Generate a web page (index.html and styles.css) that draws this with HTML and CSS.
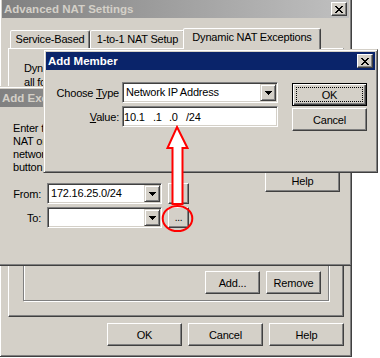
FILE: index.html
```html
<!DOCTYPE html>
<html lang="en">
<head>
    <meta charset="UTF-8">
    <title>Add Member</title>
    <link rel="stylesheet" href="styles.css">
</head>
<body>
<div class="desktop">

    <div class="window nat-window">
        <div class="titlebar inactive">
            <span class="title">Advanced NAT Settings</span>
            <span class="close-btn"><svg width="8" height="7" viewBox="0 0 8 7"><path d="M0 0h2v1H0zM6 0h2v1H6zM1 1h2v1H1zM5 1h2v1H5zM2 2h4v1H2zM3 3h2v1H3zM2 4h4v1H2zM1 5h2v1H1zM5 5h2v1H5zM0 6h2v1H0zM6 6h2v1H6z"/></svg></span>
        </div>
        <div class="tabs">
            <div class="tab tab-service">Service-Based</div>
            <div class="tab tab-one">1-to-1 NAT Setup</div>
            <div class="tab tab-dynamic selected">Dynamic NAT Exceptions</div>
        </div>
        <div class="tab-panel">
            <p class="intro">Dynamic NAT is not applied to traffic from the following sources<br>all following destinations listed below.</p>
            <div class="group">
                <div class="group-buttons">
                    <button class="btn btn-small">Add...</button>
                    <button class="btn btn-small">Remove</button>
                </div>
            </div>
        </div>
        <div class="dialog-buttons">
            <button class="btn">OK</button>
            <button class="btn">Cancel</button>
            <button class="btn">Help</button>
        </div>
    </div>

    <div class="window exception-window">
        <div class="titlebar inactive">
            <span class="title">Add Exception</span>
            <span class="close-btn"><svg width="8" height="7" viewBox="0 0 8 7"><path d="M0 0h2v1H0zM6 0h2v1H6zM1 1h2v1H1zM5 1h2v1H5zM2 2h4v1H2zM3 3h2v1H3zM2 4h4v1H2zM1 5h2v1H1zM5 5h2v1H5zM0 6h2v1H0zM6 6h2v1H6z"/></svg></span>
        </div>
        <div class="exception-body">
            <div class="exception-left">
                <p class="hint">Enter the source and destination that should not use dynamic<br>NAT or click the browse button to choose a host, an alias or a<br>network. Click the Add button in the exception list or click the<br>button again to change it.</p>
                <div class="range-grid">
                    <label class="range-label">From:</label>
                    <div class="combo"><span class="combo-text">172.16.25.0/24</span><span class="drop"><svg width="7" height="4" viewBox="0 0 7 4"><path d="M0 0H7V1H6V2H5V3H4V4H3V3H2V2H1V1H0Z"/></svg></span></div>
                    <button class="btn btn-browse">...</button>
                    <label class="range-label">To:</label>
                    <div class="combo"><span class="combo-text"></span><span class="drop"><svg width="7" height="4" viewBox="0 0 7 4"><path d="M0 0H7V1H6V2H5V3H4V4H3V3H2V2H1V1H0Z"/></svg></span></div>
                    <button class="btn btn-browse">...</button>
                </div>
            </div>
            <div class="side-buttons">
                <button class="btn">OK</button>
                <button class="btn">Cancel</button>
                <button class="btn">Help</button>
            </div>
        </div>
    </div>

    <div class="window member-window">
        <div class="titlebar active">
            <span class="title">Add Member</span>
            <span class="close-btn"><svg width="8" height="7" viewBox="0 0 8 7"><path d="M0 0h2v1H0zM6 0h2v1H6zM1 1h2v1H1zM5 1h2v1H5zM2 2h4v1H2zM3 3h2v1H3zM2 4h4v1H2zM1 5h2v1H1zM5 5h2v1H5zM0 6h2v1H0zM6 6h2v1H6z"/></svg></span>
        </div>
        <div class="member-body">
            <div class="member-grid">
                <label class="member-label">Choose <u>T</u>ype</label>
                <div class="combo"><span class="combo-text">Network IP Address</span><span class="drop"><svg width="7" height="4" viewBox="0 0 7 4"><path d="M0 0H7V1H6V2H5V3H4V4H3V3H2V2H1V1H0Z"/></svg></span></div>
                <label class="member-label"><u>V</u>alue:</label>
                <div class="ip-field">
                    <span class="ip-seg seg-a">10</span>
                    <span class="ip-seg seg-b">.1</span>
                    <span class="ip-seg seg-c">.1</span>
                    <span class="ip-seg seg-b">.0</span>
                    <span class="ip-seg">/24</span>
                </div>
            </div>
            <div class="member-buttons">
                <button class="btn btn-default">OK</button>
                <button class="btn">Cancel</button>
            </div>
        </div>
    </div>

    <svg class="callout" width="380" height="358" viewBox="0 0 380 358">
        <path d="M177 127 L187.5 148 H182.5 V204 H172.5 V148 H167.5 Z" fill="#fff" stroke="#f00" stroke-width="2"/>
        <ellipse cx="177.5" cy="218.5" rx="14.8" ry="12.6" fill="none" stroke="#f00" stroke-width="2"/>
    </svg>

</div>
</body>
</html>
```

FILE: styles.css
```css
* {
    box-sizing: border-box;
}
body {
    margin: 0;
    background: #fff;
    font-family: "Liberation Sans", Arial, sans-serif;
    font-size: 11px;
    letter-spacing: -0.2px;
    color: #000;
}
.desktop {
    position: relative;
    width: 380px;
    height: 358px;
    overflow: hidden;
}

/* windows */
.window {
    position: absolute;
    display: flex;
    flex-direction: column;
    background: #d4d0c8;
    border: 1px solid;
    border-color: #d4d0c8 #404040 #404040 #d4d0c8;
    box-shadow: inset 1px 1px #fff, inset -1px -1px #808080;
    padding: 2px;
}
.nat-window {
    left: -1px;
    top: -3px;
    width: 353px;
    height: 360px;
}
.exception-window {
    left: -3px;
    top: 86px;
    width: 355px;
    height: 180px;
}
.member-window {
    left: 43px;
    top: 49px;
    width: 335px;
    height: 124px;
}
.titlebar {
    display: flex;
    align-items: center;
    justify-content: space-between;
    height: 18px;
    padding: 0 2px;
    flex-shrink: 0;
}
.titlebar .title {
    font-weight: bold;
    font-size: 11.5px;
    letter-spacing: 0;
    white-space: nowrap;
}
.inactive {
    background: linear-gradient(to right, #808080, #c0c0c0);
    color: #d4d0c8;
}
.active {
    background: #0a246a;
    color: #fff;
}
.close-btn {
    display: flex;
    align-items: center;
    justify-content: center;
    width: 16px;
    height: 14px;
    background: #d4d0c8;
    border: 1px solid;
    border-color: #fff #404040 #404040 #fff;
    box-shadow: inset -1px -1px #808080;
}

/* buttons */
.btn {
    width: 75px;
    height: 23px;
    padding: 0;
    font: inherit;
    letter-spacing: inherit;
    color: #000;
    background: #d4d0c8;
    border: 1px solid;
    border-color: #fff #404040 #404040 #fff;
    box-shadow: inset -1px -1px #808080;
}
.btn-small {
    width: 55px;
}
.btn-browse {
    width: 21px;
    height: 21px;
    font-size: 10px;
}
.btn-default {
    border: 1px solid #000;
    box-shadow: inset 1px 1px #fff, inset -1px -1px #404040, inset -2px -2px #808080;
    outline: 1px dotted #000;
    outline-offset: -5px;
}

/* tabs */
.tabs {
    display: flex;
    align-items: flex-end;
    height: 30px;
    margin-left: 8px;
    position: relative;
    z-index: 1;
    flex-shrink: 0;
}
.tab {
    height: 18px;
    padding-top: 1px;
    line-height: 14px;
    text-align: center;
    white-space: nowrap;
    background: #d4d0c8;
    border: 1px solid;
    border-bottom: none;
    border-color: #fff #404040 transparent #fff;
    border-radius: 2px 2px 0 0;
    box-shadow: inset -1px 0 #808080;
}
.tab-service {
    width: 80px;
}
.tab-one {
    width: 95px;
}
.tab-dynamic {
    width: 134px;
}
.tab.selected {
    width: 138px;
    height: 21px;
    margin: 0 -2px -1px -2px;
    position: relative;
    z-index: 2;
}
.tab-panel {
    display: flex;
    flex-direction: column;
    height: 269px;
    margin: 0 5px 0 6px;
    padding: 12px 14px 15px 14px;
    border: 1px solid;
    border-color: #fff #404040 #404040 #fff;
    box-shadow: inset -1px -1px #808080;
}
.intro {
    margin: 0;
    padding-left: 1px;
    line-height: 14px;
    white-space: nowrap;
    overflow: hidden;
}
.group {
    flex: 1;
    display: flex;
    align-items: flex-end;
    justify-content: flex-end;
    margin-top: 8px;
    padding: 0 7px 6px 0;
    border: 1px solid #808080;
    box-shadow: inset 1px 1px #fff, 1px 1px #fff;
}
.group-buttons {
    display: flex;
    gap: 6px;
}
.dialog-buttons {
    display: flex;
    justify-content: flex-end;
    gap: 6px;
    margin: 6px 5px 0 0;
}

/* add exception */
.exception-body {
    display: flex;
    justify-content: space-between;
    flex: 1;
}
.exception-left {
    padding-top: 15px;
}
.hint {
    width: 240px;
    margin: 0 0 9px;
    padding-left: 13px;
    line-height: 13px;
    white-space: nowrap;
    overflow: hidden;
}
.range-grid {
    display: grid;
    grid-template-columns: 41px 115px 21px;
    grid-template-rows: 21px 21px;
    column-gap: 6px;
    row-gap: 3px;
    align-items: center;
}
.range-label {
    text-align: right;
}
.side-buttons {
    display: flex;
    flex-direction: column;
    gap: 6px;
    padding: 4px 9px 0 0;
}

/* fields */
.combo {
    display: flex;
    align-items: stretch;
    height: 21px;
    padding: 1px;
    background: #fff;
    border: 1px solid;
    border-color: #808080 #fff #fff #808080;
    box-shadow: inset 1px 1px #404040, inset -1px -1px #d4d0c8;
}
.combo-text {
    flex: 1;
    padding-left: 2px;
    line-height: 17px;
    white-space: nowrap;
    overflow: hidden;
}
.drop {
    display: flex;
    align-items: center;
    justify-content: center;
    width: 16px;
    background: #d4d0c8;
    border: 1px solid;
    border-color: #d4d0c8 #404040 #404040 #d4d0c8;
    box-shadow: inset 1px 1px #fff, inset -1px -1px #808080;
}
.ip-field {
    display: flex;
    align-items: center;
    height: 21px;
    padding: 0 1px;
    background: #fff;
    border: 1px solid;
    border-color: #808080 #fff #fff #808080;
    box-shadow: inset 1px 1px #404040, inset -1px -1px #d4d0c8;
}
.seg-a {
    width: 12px;
}
.seg-b {
    width: 17px;
}
.seg-c {
    width: 16px;
}

/* add member */
.member-body {
    display: flex;
    justify-content: space-between;
    padding: 12px 8px 0 8px;
}
.member-grid {
    display: grid;
    grid-template-columns: 65px 156px;
    grid-template-rows: 21px 21px;
    column-gap: 3px;
    row-gap: 3px;
    align-items: center;
}
.member-label {
    text-align: right;
    white-space: nowrap;
}
.member-buttons {
    display: flex;
    flex-direction: column;
    gap: 2px;
    padding-top: 1px;
}

.callout {
    position: absolute;
    left: 0;
    top: 0;
    pointer-events: none;
}
```
